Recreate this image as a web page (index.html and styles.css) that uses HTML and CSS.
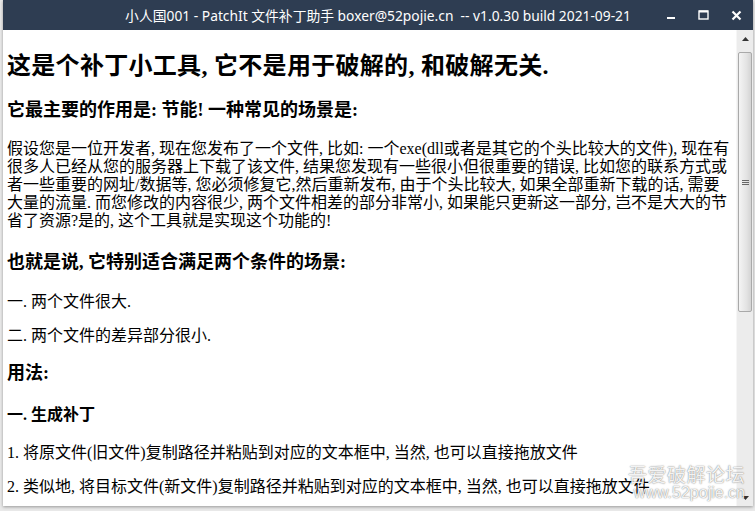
FILE: index.html
```html
<!DOCTYPE html>
<html lang="zh-CN">
<head>
<meta charset="UTF-8">
<title>PatchIt 文件补丁助手</title>
<link rel="stylesheet" href="styles.css">
</head>
<body>

<div class="window">

    <div class="titlebar">
        <span></span>
        <span class="title">小人国001 - PatchIt 文件补丁助手 boxer@52pojie.cn  -- v1.0.30 build 2021-09-21</span>
        <div class="controls">
            <span class="ctl">
                <svg width="10" height="10" viewBox="0 0 10 10"><rect x="1" y="7" width="8" height="2" fill="#fff"/></svg>
            </span>
            <span class="ctl">
                <svg width="11" height="10" viewBox="0 0 11 10"><rect x="1" y="1" width="9" height="8" fill="none" stroke="#fff" stroke-width="1.4"/><rect x="1" y="0.5" width="9" height="2" fill="#fff"/></svg>
            </span>
            <span class="ctl">
                <svg width="11" height="11" viewBox="0 0 11 11"><path d="M1.5 1.5 L9.5 9.5 M9.5 1.5 L1.5 9.5" stroke="#fff" stroke-width="2.2"/></svg>
            </span>
        </div>
    </div>

    <div class="body">

        <div class="content">
            <h1>这是个补丁小工具, 它不是用于破解的, 和破解无关.</h1>

            <h2 class="first">它最主要的作用是: 节能! 一种常见的场景是:</h2>

            <p class="intro">
                假设您是一位开发者, 现在您发布了一个文件, 比如: 一个exe(dll或者是其它的个头比较大的文件), 现在有<br>
                很多人已经从您的服务器上下载了该文件, 结果您发现有一些很小但很重要的错误, 比如您的联系方式或<br>
                者一些重要的网址/数据等, 您必须修复它,然后重新发布, 由于个头比较大, 如果全部重新下载的话, 需要<br>
                大量的流量. 而您修改的内容很少, 两个文件相差的部分非常小, 如果能只更新这一部分, 岂不是大大的节<br>
                省了资源?是的, 这个工具就是实现这个功能的!
            </p>

            <h2 class="second">也就是说, 它特别适合满足两个条件的场景:</h2>

            <p class="item">一. 两个文件很大.</p>
            <p class="item next">二. 两个文件的差异部分很小.</p>

            <h2 class="third">用法:</h2>

            <h3>一. 生成补丁</h3>

            <p class="item">1. 将原文件(旧文件)复制路径并粘贴到对应的文本框中, 当然, 也可以直接拖放文件</p>
            <p class="item step">2. 类似地, 将目标文件(新文件)复制路径并粘贴到对应的文本框中, 当然, 也可以直接拖放文件</p>
        </div>

        <div class="scrollbar">
            <div class="sb-btn">
                <svg width="7" height="4" viewBox="0 0 7 4"><path d="M0 4 L3.5 0 L7 4 Z" fill="#333"/></svg>
            </div>
            <div class="sb-track">
                <div class="sb-thumb">
                    <span class="grip"></span>
                </div>
            </div>
            <div class="sb-btn">
                <svg width="7" height="4" viewBox="0 0 7 4"><path d="M0 0 L7 0 L3.5 4 Z" fill="#333"/></svg>
            </div>
        </div>

    </div>

    <div class="watermark">
        <div class="wm-cn">吾爱破解论坛</div>
        <div class="wm-url">www.52pojie.cn</div>
    </div>

</div>

</body>
</html>
```

FILE: styles.css
```css
*{
    margin:0;
    padding:0;
    box-sizing:border-box;
}

body{
    background:#e9e9e9;
    width:755px;
    height:511px;
    overflow:hidden;
}

.window{
    position:relative;
    margin-left:3px;
    width:750px;
    height:506px;
    background:#fff;
    display:flex;
    flex-direction:column;
    box-shadow:0 1px 3px rgba(0,0,0,.35);
}

/* title bar */

.titlebar{
    height:30px;
    background:#2e3d52;
    color:#fff;
    display:grid;
    grid-template-columns:1fr auto 1fr;
    align-items:center;
    font-family:"Noto Sans","Noto Sans CJK SC",sans-serif;
    font-size:13.8px;
}

.title{
    white-space:pre;
}

.controls{
    display:flex;
    justify-content:flex-end;
    height:30px;
}

.ctl{
    width:33px;
    display:flex;
    align-items:center;
    justify-content:center;
}

/* page body */

.body{
    flex:1;
    display:flex;
    min-height:0;
}

.content{
    flex:1;
    overflow:hidden;
    padding-left:4px;
    color:#000;
    font-family:"Liberation Serif","Noto Sans CJK SC",serif;
}

h1{
    font-size:24px;
    line-height:28px;
    font-weight:bold;
    margin-top:22px;
    white-space:nowrap;
    letter-spacing:.3px;
}

h2{
    font-size:18px;
    line-height:22px;
    font-weight:bold;
}

h2.first{ margin-top:19px; }
h2.second{ margin-top:21px; }
h2.third{ margin-top:17px; }

h3{
    font-size:16px;
    line-height:18px;
    font-weight:bold;
    margin-top:22px;
}

p{
    font-size:16px;
    line-height:18px;
    white-space:nowrap;
}

.intro{
    margin-top:19px;
}

.item{
    margin-top:20px;
}

.item.next{
    margin-top:16px;
}

.item.step{
    margin-top:16px;
}

/* scrollbar */

.scrollbar{
    width:17px;
    background:#ececec;
    border-left:1px solid #f6f6f6;
    display:flex;
    flex-direction:column;
}

.sb-btn{
    height:17px;
    display:flex;
    align-items:center;
    justify-content:center;
}

.sb-track{
    flex:1;
    padding-top:5px;
}

.sb-thumb{
    height:260px;
    margin:0 1px;
    border:1px solid #a9a9a9;
    border-radius:2px;
    background:linear-gradient(to right,#f4f4f4,#e4e4e4 60%,#d4d4d4);
    display:flex;
    align-items:center;
    justify-content:center;
}

.grip{
    width:7px;
    height:5px;
    border-top:1px solid #666;
    border-bottom:1px solid #666;
    position:relative;
}

.grip::after{
    content:"";
    position:absolute;
    left:0;
    right:0;
    top:1px;
    border-top:1px solid #666;
}

/* forum watermark over the corner */

.watermark{
    position:absolute;
    right:8px;
    bottom:4px;
    color:rgba(255,255,255,.92);
    text-shadow:0 0 1px rgba(0,0,0,.45),0 0 2px rgba(0,0,0,.25);
    font-family:"Noto Sans CJK SC","Noto Sans",sans-serif;
    text-align:right;
    pointer-events:none;
}

.wm-cn{
    font-size:19px;
    line-height:20px;
    letter-spacing:.5px;
}

.wm-url{
    font-size:16px;
    line-height:18px;
    font-family:"Liberation Sans",sans-serif;
}
```
